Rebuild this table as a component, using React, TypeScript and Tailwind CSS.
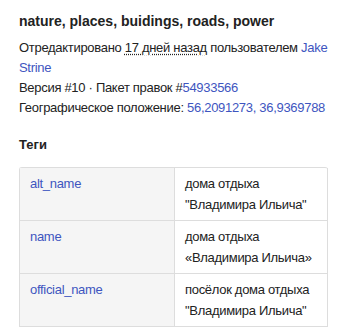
const LINK = 'text-[#3e55c0]'

const tags = [
  { key: 'alt_name', value: ['дома отдыха', '"Владимира Ильича"'] },
  { key: 'name', value: ['дома отдыха', '«Владимира Ильича»'] },
  { key: 'official_name', value: ['посёлок дома отдыха', '"Владимира Ильича"'] },
]

export default function App() {
  return (
    <div className="min-h-[328px] bg-white pl-[19px] pr-[4px] pt-[11px] text-[13px] leading-[20px] tracking-[-0.3px] text-[#222] [font-family:'Liberation_Sans',Arial,sans-serif]">
      <h2 className="text-[14px] font-bold tracking-normal">nature, places, buidings, roads, power</h2>

      <div className="mt-[7px]">
        <p>
          Отредактировано{' '}
          <span className="underline decoration-dotted underline-offset-2">17 дней назад</span>{' '}
          пользователем <a className={LINK}>Jake Strine</a>
        </p>
        <p>
          Версия #10 · Пакет правок #<a className={LINK}>54933566</a>
        </p>
        <p className="whitespace-nowrap">
          Географическое положение: <a className={LINK}>56,2091273, 36,9369788</a>
        </p>
      </div>

      <h3 className="mt-[17px] font-bold tracking-normal">Теги</h3>

      <table className="mt-[12px] w-[309px] border-separate border-spacing-0 rounded-t-[3px] border-l border-t border-[#ddd] leading-[21px]">
        <tbody>
          {tags.map((t) => (
            <tr key={t.key}>
              <td className="w-[155px] border-b border-r border-[#ddd] bg-[#f5f5f5] px-[10px] pb-[5px] pt-[5px] align-top">
                <a className={LINK}>{t.key}</a>
              </td>
              <td className="whitespace-nowrap border-b border-r border-[#ddd] px-[10px] pb-[5px] pt-[5px] align-top">
                {t.value.map((line) => (
                  <div key={line}>{line}</div>
                ))}
              </td>
            </tr>
          ))}
        </tbody>
      </table>
    </div>
  )
}
